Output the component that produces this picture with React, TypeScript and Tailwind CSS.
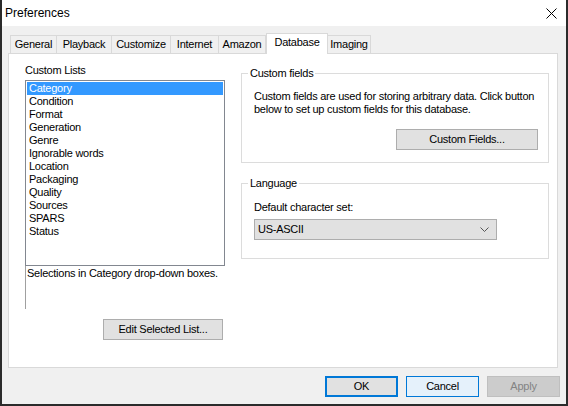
const tabs = [
  { label: "General", w: "w-[47px]" },
  { label: "Playback", w: "w-[56px]" },
  { label: "Customize", w: "w-[60px]" },
  { label: "Internet", w: "w-[49px]" },
  { label: "Amazon", w: "w-[48px]" },
  { label: "Database", w: "w-[62px]", active: true },
  { label: "Imaging", w: "w-[44px]" },
];

const lists = [
  "Category",
  "Condition",
  "Format",
  "Generation",
  "Genre",
  "Ignorable words",
  "Location",
  "Packaging",
  "Quality",
  "Sources",
  "SPARS",
  "Status",
];

function Button({ children, className = "" }: { children: React.ReactNode; className?: string }) {
  return (
    <button
      className={`flex h-[21px] items-center justify-center border border-[#adadad] bg-[#e1e1e1] text-black ${className}`}
    >
      {children}
    </button>
  );
}

export default function App() {
  return (
    <div
      className="flex h-[406px] w-[568px] flex-col border-x-2 border-b-2 border-[#2b2b2b] bg-[#f0f0f0] text-[11px] leading-[13px] tracking-[-0.25px] text-black"
      style={{ fontFamily: '"Liberation Sans", Arial, sans-serif' }}
    >
      {/* title bar */}
      <div className="flex h-[26px] shrink-0 items-center justify-between bg-white pl-[3px] pr-[9px]">
        <span className="text-[12px] tracking-normal">Preferences</span>
        <svg width="11" height="11" viewBox="0 0 11 11" className="mt-[1px]">
          <path d="M0.5 0.5 L10.5 10.5 M10.5 0.5 L0.5 10.5" stroke="#000" strokeWidth="1" />
        </svg>
      </div>

      <div className="flex flex-1 flex-col pl-[6px] pr-[8px] pt-[7px]">
        {/* tabs */}
        <div className="relative z-10 flex h-[20px] items-end pl-[2px]">
          {tabs.map((t) =>
            t.active ? (
              <div
                key={t.label}
                className={`${t.w} -mb-px flex h-[21px] items-center justify-center border-x border-t border-[#d9d9d9] bg-white pb-[3px]`}
              >
                {t.label}
              </div>
            ) : (
              <div
                key={t.label}
                className={`${t.w} -ml-px flex h-[18px] items-center justify-center border-x border-t border-[#d9d9d9] bg-[#f0f0f0] first:ml-0`}
              >
                {t.label}
              </div>
            )
          )}
        </div>

        {/* panel */}
        <div className="flex h-[315px] shrink-0 border border-[#d9d9d9] bg-white">
          {/* left column */}
          <div className="ml-[16px] mt-[10px] flex w-[200px] flex-col">
            <div>Custom Lists</div>
            <div className="mt-[3px] h-[186px] border border-[#828790] p-px">
              {lists.map((l, i) => (
                <div
                  key={l}
                  className={`h-[13px] pl-[2px] ${i === 0 ? "bg-[#3399ff] text-white" : ""}`}
                >
                  {l}
                </div>
              ))}
            </div>
            <div className="h-[43px] border-l border-[#a0a0a0] pl-px pt-px whitespace-nowrap">
              Selections in Category drop-down boxes.
            </div>
            <div className="mt-[10px] flex justify-end pr-[2px]">
              <Button className="w-[120px]">Edit Selected List...</Button>
            </div>
          </div>

          {/* right column */}
          <div className="ml-[16px] mt-[13px] flex w-[308px] flex-col">
            <fieldset className="h-[96px] border border-[#dcdcdc] pl-[12px] pr-[10px]">
              <legend className="-ml-[6px] px-[2px]">Custom fields</legend>
              <p className="mt-[10px] whitespace-nowrap">
                Custom fields are used for storing arbitrary data. Click button
                <br />
                below to set up custom fields for this database.
              </p>
              <div className="mt-[13px] flex justify-end">
                <Button className="w-[142px]">Custom Fields...</Button>
              </div>
            </fieldset>

            <fieldset className="mt-[14px] h-[82px] border border-[#dcdcdc] pl-[12px]">
              <legend className="-ml-[6px] px-[2px]">Language</legend>
              <div className="mt-[11px]">Default character set:</div>
              <div className="mt-[5px] flex h-[21px] w-[243px] items-center justify-between border border-[#adadad] bg-[#e1e1e1] pl-[3px] pr-[7px]">
                <span>US-ASCII</span>
                <svg width="9" height="5" viewBox="0 0 9 5">
                  <path d="M0.5 0.5 L4.5 4.5 L8.5 0.5" fill="none" stroke="#555" strokeWidth="1" />
                </svg>
              </div>
            </fieldset>
          </div>
        </div>

        {/* bottom buttons */}
        <div className="mt-[8px] flex justify-end gap-[8px]">
          <button className="flex h-[21px] w-[73px] items-center justify-center border-2 border-[#0078d7] bg-[#e1e1e1]">
            OK
          </button>
          <button className="flex h-[21px] w-[73px] items-center justify-center border border-[#0078d7] bg-[#e5f1fb]">
            Cancel
          </button>
          <button className="mr-[-2px] flex h-[21px] w-[73px] items-center justify-center border border-[#bfbfbf] bg-[#cccccc] text-[#838383]">
            Apply
          </button>
        </div>
      </div>
    </div>
  );
}
